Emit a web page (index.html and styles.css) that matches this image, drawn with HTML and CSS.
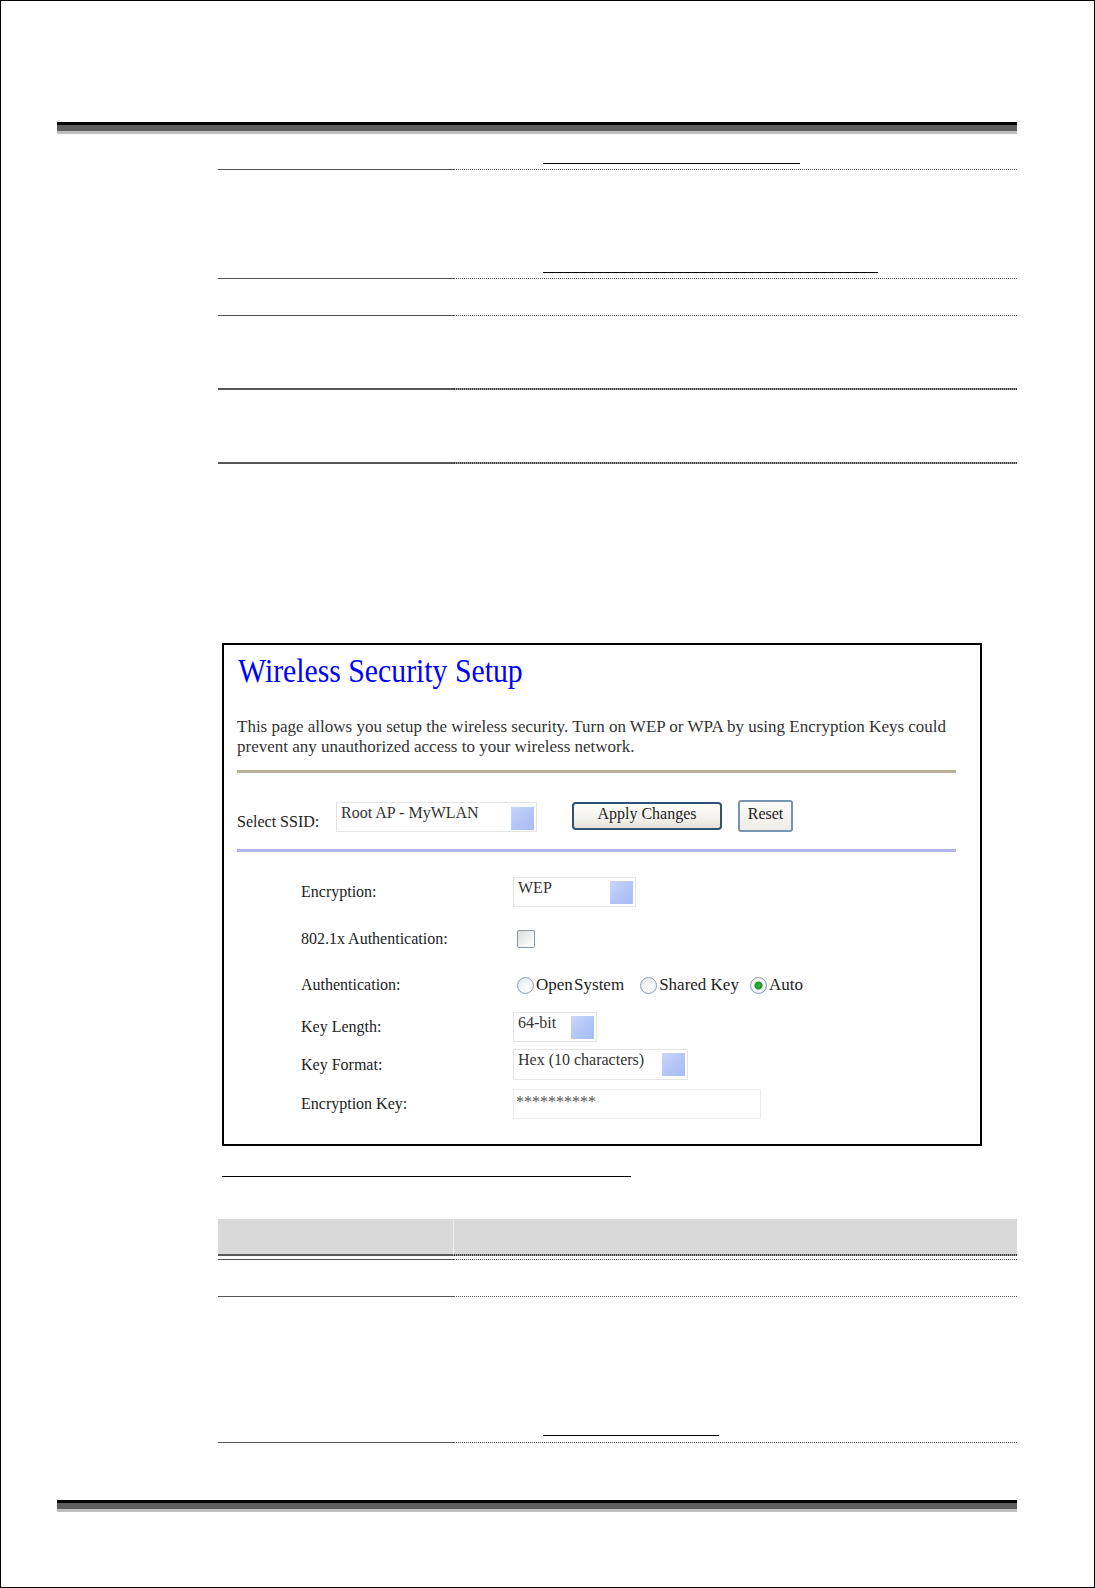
FILE: index.html
```html
<!DOCTYPE html>
<html lang="en">
<head>
  <meta charset="UTF-8" />
  <title>Wireless Security Setup</title>
  <link rel="stylesheet" href="styles.css">
</head>
<body>

<div class="page">
  <div class="bar"></div>

  <div class="table">
    <div class="row row-a">
      <div class="cell"></div>
      <div class="cell"><span class="link link-1"></span></div>
    </div>
    <div class="row row-b">
      <div class="cell"></div>
      <div class="cell"><span class="link link-2"></span></div>
    </div>
    <div class="row row-c">
      <div class="cell"></div>
      <div class="cell"></div>
    </div>
    <div class="row row-d thick">
      <div class="cell"></div>
      <div class="cell"></div>
    </div>
    <div class="row row-e thick">
      <div class="cell"></div>
      <div class="cell"></div>
    </div>
  </div>

  <div class="shot">
    <h1>Wireless Security Setup</h1>
    <p class="intro">This page allows you setup the wireless security. Turn on WEP or WPA by using Encryption Keys could<br>prevent any unauthorized access to your wireless network.</p>
    <div class="line-gold"></div>

    <div class="ssid-row">
      <span class="ssid-label">Select SSID:</span>
      <div class="select ssid"><span>Root AP - MyWLAN</span><i class="arrow"></i></div>
      <button class="btn apply">Apply Changes</button>
      <button class="btn reset">Reset</button>
    </div>
    <div class="line-blue"></div>

    <div class="form">
      <div class="field f1">
        <span class="label">Encryption:</span>
        <div class="select enc"><span>WEP</span><i class="arrow"></i></div>
      </div>
      <div class="field f2">
        <span class="label">802.1x Authentication:</span>
        <input type="checkbox" class="check">
      </div>
      <div class="field f3">
        <span class="label">Authentication:</span>
        <label class="opt o1"><input type="radio" name="auth" class="radio">Open System</label>
        <label class="opt o2"><input type="radio" name="auth" class="radio">Shared Key</label>
        <label class="opt"><input type="radio" name="auth" class="radio" checked>Auto</label>
      </div>
      <div class="field f4">
        <span class="label">Key Length:</span>
        <div class="select klen"><span>64-bit</span><i class="arrow"></i></div>
      </div>
      <div class="field f5">
        <span class="label">Key Format:</span>
        <div class="select kfmt"><span>Hex (10 characters)</span><i class="arrow"></i></div>
      </div>
      <div class="field f6">
        <span class="label">Encryption Key:</span>
        <div class="textbox">**********</div>
      </div>
    </div>
  </div>

  <span class="caption"></span>

  <div class="table table-2">
    <div class="row row-head thick">
      <div class="cell"></div>
      <div class="cell"></div>
    </div>
    <div class="row row-gap">
      <div class="cell"></div>
      <div class="cell"></div>
    </div>
    <div class="row row-c">
      <div class="cell"></div>
      <div class="cell"></div>
    </div>
    <div class="row row-f">
      <div class="cell"></div>
      <div class="cell"><span class="link link-3"></span></div>
    </div>
  </div>

  <div class="bar foot"></div>
</div>

</body>
</html>
```

FILE: styles.css
```css
* {
  box-sizing: border-box;
}

body {
  margin: 0;
  background: #fff;
  font-family: "Liberation Serif", "Times New Roman", serif;
}

.page {
  width: 1095px;
  height: 1588px;
  border: 1px solid #000;
  overflow: hidden;
}

/* header / footer bars */
.bar {
  width: 960px;
  height: 12px;
  margin: 121px 0 0 56px;
  background: #5e5e5e;
  border-top: 3px solid #000;
  border-bottom: 3px solid #bfbfbf;
}

.bar.foot {
  margin-top: 57px;
}

/* document tables (text stripped, rules only) */
.table {
  width: 799px;
  margin-left: 217px;
}

.row {
  display: grid;
  grid-template-columns: 236px 1fr;
}

.cell {
  border-bottom: 1px solid #555;
  display: flex;
  align-items: flex-end;
}

/* right column rule is a fine dotted line */
.cell + .cell {
  border-bottom: 0;
  padding-bottom: 1px;
  background: repeating-linear-gradient(90deg, #555 0 1px, transparent 1px 2px) left bottom / 100% 1px no-repeat;
}

.thick .cell {
  border-bottom-width: 2px;
}

.thick .cell + .cell {
  padding-bottom: 2px;
  background-image: repeating-linear-gradient(90deg, #3a3a3a 0 1px, #9a9a9a 1px 2px);
  background-size: 100% 2px;
}

.row-a { height: 36px; }
.row-b { height: 109px; }
.row-c { height: 37px; }
.row-d { height: 74px; }
.row-e { height: 74px; }

.link {
  display: block;
  height: 1px;
  margin: 0 0 5px 89px;
  background: #000;
}

.link-1 { width: 257px; }
.link-2 { width: 335px; }
.link-3 { width: 176px; margin-bottom: 6px; }

.table-2 {
  margin-top: 42px;
}

.row-head { height: 37px; }
.row-head .cell {
  background-color: #d9d9d9;
  border-bottom-color: #5a5a5a;
}
.row-head .cell + .cell {
  background-image: linear-gradient(#d9d9d9, #d9d9d9), repeating-linear-gradient(90deg, #3a3a3a 0 1px, #9a9a9a 1px 2px);
  background-position: left top, left bottom;
  background-size: 100% 35px, 100% 2px;
  background-repeat: no-repeat;
  background-color: transparent;
}
.row-head .cell:first-child {
  border-right: 1px solid #ececec;
}
.row-gap { height: 4px; }
.row-f { height: 146px; }

.caption {
  display: block;
  width: 409px;
  height: 1px;
  margin: 30px 0 0 221px;
  background: #000;
}

/* screenshot of the router page */
.shot {
  width: 760px;
  height: 503px;
  margin: 179px 0 0 221px;
  border: 2px solid #000;
  padding: 9px 24px 0 13px;
  color: #222;
  font-size: 16px;
}

.shot h1 {
  margin: 0 0 0 1px;
  font-size: 34px;
  font-weight: normal;
  line-height: 34px;
  white-space: nowrap;
  color: #0000ff;
  transform: scaleX(0.875);
  transform-origin: left center;
}

.intro {
  margin: 29px 0 0;
  font-size: 17px;
  line-height: 20px;
  color: #333;
}

.line-gold {
  height: 3px;
  margin-top: 13px;
  background: #b8b09b;
}

.line-blue {
  height: 3px;
  margin-top: 17px;
  background: #b3b3ec;
}

.ssid-row {
  display: flex;
  align-items: flex-start;
  height: 32px;
  margin-top: 27px;
}

.ssid-label {
  width: 99px;
  margin-top: 12px;
  line-height: 20px;
  flex-shrink: 0;
}

.select {
  display: flex;
  justify-content: space-between;
  align-items: flex-start;
  height: 30px;
  border: 1px solid #e4e4e4;
  background: #fff;
  line-height: 20px;
  color: #333;
}

.select span {
  padding-left: 4px;
  white-space: nowrap;
}

.arrow {
  width: 23px;
  height: 23px;
  margin: 3px 2px 0 0;
  flex-shrink: 0;
  background: linear-gradient(135deg, #c9d6fb 0%, #b3c5f7 55%, #a8bcf4 100%);
}

.ssid {
  width: 201px;
  margin-top: 2px;
}

.ssid .arrow {
  margin-top: 4px;
}

.btn {
  font-family: inherit;
  font-size: 16px;
  line-height: 20px;
  color: #222;
  padding: 0;
  cursor: pointer;
}

.apply {
  width: 150px;
  height: 28px;
  margin: 2px 0 0 35px;
  padding-bottom: 4px;
  border: 2px solid #33506f;
  border-radius: 4px;
  background: linear-gradient(#fefefd, #f3f2ec 60%, #e4e2d6);
}

.reset {
  width: 55px;
  height: 32px;
  margin-left: 16px;
  padding-bottom: 6px;
  padding-top: 2px;
  border: 2px solid #7994ae;
  border-radius: 3px;
  background: linear-gradient(#fbfbf9, #eeede6);
}

.form {
  padding-left: 64px;
}

.field {
  display: flex;
  align-items: center;
  height: 30px;
}

.label {
  width: 212px;
  flex-shrink: 0;
  line-height: 20px;
}

.f1 { margin-top: 25px; }
.f2 { margin-top: 17px; }
.f3 { margin-top: 16px; }
.f4 { margin-top: 12px; }
.f5 { margin-top: 7px; height: 31px; }
.f6 { margin-top: 9px; }

.enc { width: 123px; }
.klen { width: 84px; }
.kfmt { width: 175px; height: 31px; }

.check {
  appearance: none;
  width: 18px;
  height: 18px;
  margin: 0 0 0 4px;
  border: 1px solid #8898ab;
  border-radius: 2px;
  background: linear-gradient(135deg, #dcdcdc, #f7f7f7 70%, #fff);
}

.opt {
  display: flex;
  align-items: center;
  font-size: 17px;
  line-height: 20px;
  white-space: nowrap;
}

.o1 {
  margin-right: 16px;
  word-spacing: -3px;
}

.o2 {
  margin-right: 11px;
}

.radio {
  appearance: none;
  width: 17px;
  height: 17px;
  margin: 0 2px 0 0;
  border: 1px solid #8d9fb4;
  border-radius: 50%;
  background: radial-gradient(circle at 60% 65%, #ffffff, #e9ecef 70%, #d6dbe1);
}

.o1 .radio {
  margin-left: 4px;
}

.radio:checked {
  background: radial-gradient(circle, #35b840 0, #1f8f2a 3.5px, #e9f2ea 4.5px, #ffffff 6px, #d6dbe1 8px);
}

.textbox {
  width: 248px;
  height: 30px;
  padding: 4px 0 0 2px;
  border: 1px solid #ececec;
  line-height: 16px;
  font-size: 16px;
  color: #555;
}
```
